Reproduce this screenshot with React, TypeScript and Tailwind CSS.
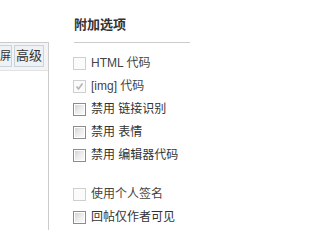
import React from "react";

type Kind = "disabled" | "disabledChecked" | "normal";

function Box({ kind }: { kind: Kind }) {
  if (kind === "normal") {
    return (
      <span className="flex h-[13px] w-[13px] shrink-0 border border-[#8c8c8c] bg-white">
        <span className="m-[1px] flex-1 bg-gradient-to-br from-[#d4d4d4] via-[#ececec] to-[#fafafa]" />
      </span>
    );
  }
  return (
    <span className="relative flex h-[13px] w-[13px] shrink-0 border border-[#cfcfcf] bg-[#fbfbfb]">
      {kind === "disabledChecked" && (
        <svg viewBox="0 0 11 11" className="absolute left-0 top-0 h-[11px] w-[11px]">
          <path d="M2.5 5.5 L4.5 8 L8.5 2.5" fill="none" stroke="#b5b5b5" strokeWidth="1.6" />
        </svg>
      )}
    </span>
  );
}

function Row({ kind, children }: { kind: Kind; children: React.ReactNode }) {
  const dim = kind !== "normal";
  return (
    <div className="flex h-[23px] items-center gap-[5px]">
      <Box kind={kind} />
      <span className={dim ? "text-[12px] leading-[23px] text-[#444]" : "text-[12px] leading-[23px] text-[#333]"}>
        {children}
      </span>
    </div>
  );
}

export default function App() {
  return (
    <div
      className="flex h-[230px] w-[205px] overflow-hidden bg-white"
      style={{ fontFamily: '"Liberation Sans", "Noto Sans CJK SC", sans-serif' }}
    >
      <div className="mt-[42px] flex h-[188px] w-[49px] shrink-0 flex-col border-r border-t border-[#cccccc]">
        <div className="flex h-[28px] items-start gap-[2px] border-b border-[#e3e3e3] bg-[#f4f4f4] pt-[2px]">
          <span className="flex h-[22px] w-[12px] items-center border border-l-0 border-[#c9d3dd] bg-[#eef1f5] text-[11px] text-[#333]">
            屏
          </span>
          <span className="flex h-[22px] w-[30px] items-center justify-center border border-[#c9d3dd] bg-[#eef1f5] text-[13px] text-[#333]">
            高级
          </span>
        </div>
        <div className="flex-1 bg-white" />
      </div>
      <div className="ml-[24px] flex flex-1 flex-col pt-[17px]">
        <div className="pl-[1px] text-[13px] font-bold leading-[16px] text-[#333]">附加选项</div>
        <div className="ml-[1px] mt-[9px] h-px w-[116px] bg-[#cccccc]" />
        <div className="mt-[9px] flex flex-col">
          <Row kind="disabled">HTML 代码</Row>
          <Row kind="disabledChecked">[img] 代码</Row>
          <Row kind="normal">禁用 链接识别</Row>
          <Row kind="normal">禁用 表情</Row>
          <Row kind="normal">禁用 编辑器代码</Row>
          <div className="h-[16px]" />
          <Row kind="disabled">使用个人签名</Row>
          <Row kind="normal">回帖仅作者可见</Row>
        </div>
      </div>
    </div>
  );
}
